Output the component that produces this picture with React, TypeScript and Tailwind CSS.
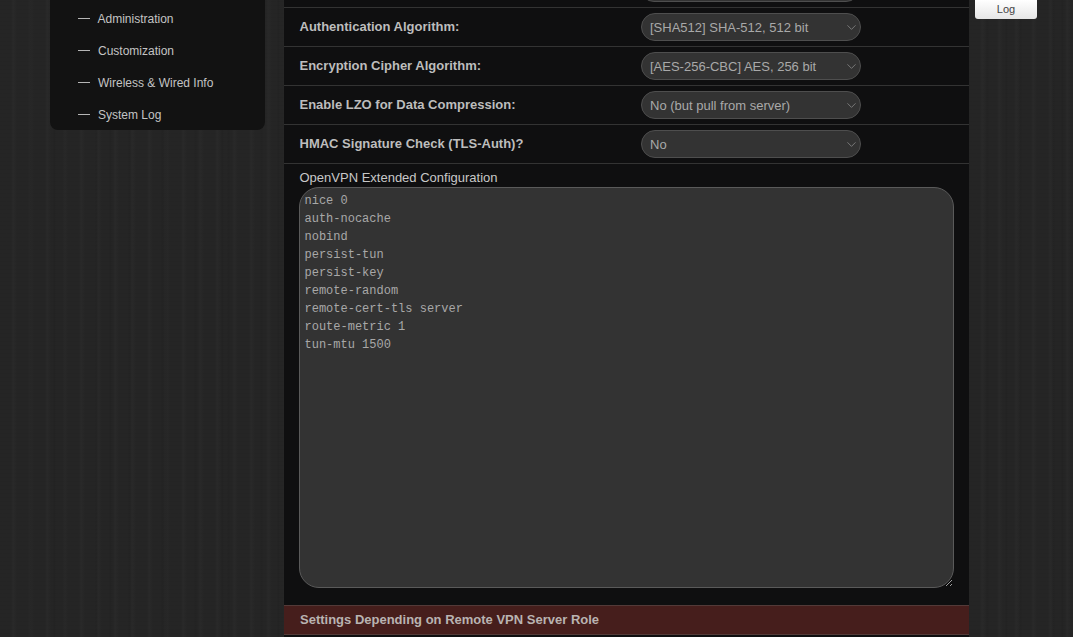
// App.tsx
import { ChevronDown } from 'lucide-react';

const navItems = [
  { label: 'Administration', gap: 'ml-[7.5px]' },
  { label: 'Customization', gap: 'ml-[8px]' },
  { label: 'Wireless & Wired Info', gap: 'ml-[8px]' },
  { label: 'System Log', gap: 'ml-[8px]' },
];

const rows = [
  { label: 'Authentication Algorithm:', value: '[SHA512] SHA-512, 512 bit' },
  { label: 'Encryption Cipher Algorithm:', value: '[AES-256-CBC] AES, 256 bit' },
  { label: 'Enable LZO for Data Compression:', value: 'No (but pull from server)' },
  { label: 'HMAC Signature Check (TLS-Auth)?', value: 'No' },
];

const config = `nice 0
auth-nocache
nobind
persist-tun
persist-key
remote-random
remote-cert-tls server
route-metric 1
tun-mtu 1500`;

function FakeSelect({ value }: { value: string }) {
  return (
    <div className="flex h-[28px] w-[220px] items-center justify-between rounded-[14px] border border-[#4e4e4e] bg-[#333333] pl-[8px] pr-[1px] text-[13px] text-[#a9a9a9]">
      <span className="pt-[1px]">{value}</span>
      <ChevronDown size={15} strokeWidth={1.25} className="text-[#8a8a8a]" />
    </div>
  );
}

export default function App() {
  return (
    <div className="flex h-[637px] w-[1073px] overflow-hidden bg-[#252525] bg-[repeating-linear-gradient(90deg,transparent_0px,transparent_53px,#00000014_54px,transparent_56px),repeating-linear-gradient(90deg,transparent_0px,transparent_29px,#0000000d_30px,transparent_33px),repeating-linear-gradient(90deg,transparent_0px,transparent_11px,#ffffff05_13px,transparent_17px),repeating-linear-gradient(0deg,transparent_0px,transparent_3px,#0000000a_4px)] font-['Liberation_Sans',Arial,sans-serif]">
      {/* Left menu */}
      <aside className="w-[284px] shrink-0 pl-[50px]">
        <nav className="h-[130px] w-[215px] rounded-b-[8px] bg-[#121212] pl-[28px] pt-[3px]">
          {navItems.map((item) => (
            <div key={item.label} className="flex h-[32px] items-center text-[12px] text-[#c4c4c4]">
              <span className="-mt-[2px] h-px w-[12px] bg-[#b5b5b5]" />
              <span className={item.gap}>{item.label}</span>
            </div>
          ))}
        </nav>
      </aside>

      {/* Settings table */}
      <main className="flex h-[637px] w-[685px] shrink-0 flex-col bg-[#0f0f10]">
        <div className="h-[8px] shrink-0 overflow-hidden border-b border-[#333333] pl-[356px]">
          <div className="-mt-[26px] h-[28px] w-[220px] rounded-[14px] border border-[#4e4e4e] bg-[#333333]" />
        </div>
        {rows.map((row) => (
          <div key={row.label} className="flex h-[39px] shrink-0 items-center border-b border-[#333333] pl-[15.5px]">
            <span className="w-[341.5px] shrink-0 text-[13px] font-bold text-[#bdbdbd]">{row.label}</span>
            <FakeSelect value={row.value} />
          </div>
        ))}
        <div className="pl-[15px] pr-[15px]">
          <div className="mt-[6px] h-[17px] pl-[0.5px] text-[13px] leading-[15px] text-[#c8c8c8]">OpenVPN Extended Configuration</div>
          <textarea
            readOnly
            defaultValue={config}
            spellCheck={false}
            className="block h-[401px] w-[655px] rounded-[20px] border border-[#5a5a5a] bg-[#333333] px-[4.5px] py-[4px] font-['Liberation_Mono','Courier_New',monospace] text-[12px] leading-[18px] text-[#a8a8a8] outline-none"
          />
        </div>
        <div className="mt-[17px] flex h-[30px] shrink-0 items-center border-y border-[#533a38] bg-[#461e1c] pl-[16px] text-[13px] font-bold text-[#b9b3b1]">
          Settings Depending on Remote VPN Server Role
        </div>
      </main>

      {/* Right tabs */}
      <div className="pl-[6px]">
        <button className="block h-[19px] w-[62px] rounded-b-[3px] bg-gradient-to-b from-white to-[#e6e6e6] text-[11px] leading-[19px] text-[#444444]">
          Log
        </button>
      </div>
    </div>
  );
}
